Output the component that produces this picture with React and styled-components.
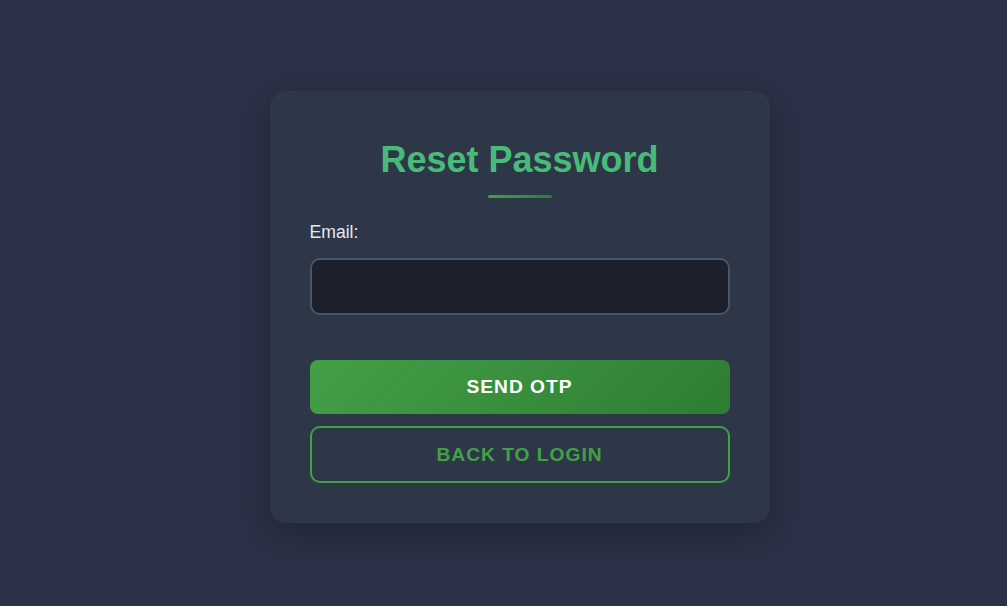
import React from "react";
import styled, { createGlobalStyle } from "styled-components";

const GlobalStyle = createGlobalStyle`
  * { box-sizing: border-box; }
  body {
    margin: 0;
    background-color: #2b3146;
    font-family: "Liberation Sans", Arial, sans-serif;
  }
`;

const Page = styled.div`
  min-height: 100vh;
  display: flex;
  align-items: center;
  justify-content: center;
  padding: 8px 0 0 32px;
`;

const Card = styled.div`
  width: 500px;
  background-color: #2e3748;
  border-radius: 16px;
  padding: 40px;
  box-shadow: 0 10px 30px rgba(0, 0, 0, 0.25);
  display: flex;
  flex-direction: column;
`;

const Title = styled.h2`
  margin: 8px 0 0;
  text-align: center;
  font-size: 36px;
  font-weight: 700;
  color: #48bb78;
`;

const Underline = styled.div`
  width: 64px;
  height: 3px;
  border-radius: 2px;
  margin: 14px auto 0;
  background: linear-gradient(90deg, #43a047, #2e7d32);
`;

const Label = styled.label`
  margin-top: 24px;
  font-size: 17.6px;
  color: #e2e8f0;
`;

const Input = styled.input`
  margin-top: 15px;
  height: 57px;
  width: 100%;
  background-color: #1b202c;
  border: 2px solid #4a5568;
  border-radius: 10px;
  color: #e2e8f0;
  font-size: 16px;
  padding: 0 14px;
  outline: none;
`;

const Button = styled.button`
  width: 100%;
  height: ${(p) => (p.$outline ? "57px" : "54px")};
  margin-top: ${(p) => (p.$outline ? "12px" : "45px")};
  border-radius: ${(p) => (p.$outline ? "10px" : "8px")};
  border: ${(p) => (p.$outline ? "2px solid #43a047" : "none")};
  background: ${(p) =>
    p.$outline ? "transparent" : "linear-gradient(135deg, #43a047, #2e7d32)"};
  color: ${(p) => (p.$outline ? "#43a047" : "#ffffff")};
  font-family: "Liberation Sans", Arial, sans-serif;
  font-size: 19.2px;
  font-weight: 700;
  letter-spacing: 1px;
  text-transform: uppercase;
  cursor: pointer;
`;

export default function App() {
  return (
    <>
      <GlobalStyle />
      <Page>
        <Card>
          <Title>Reset Password</Title>
          <Underline />
          <Label>Email:</Label>
          <Input type="email" />
          <Button>Send OTP</Button>
          <Button $outline>Back to Login</Button>
        </Card>
      </Page>
    </>
  );
}
